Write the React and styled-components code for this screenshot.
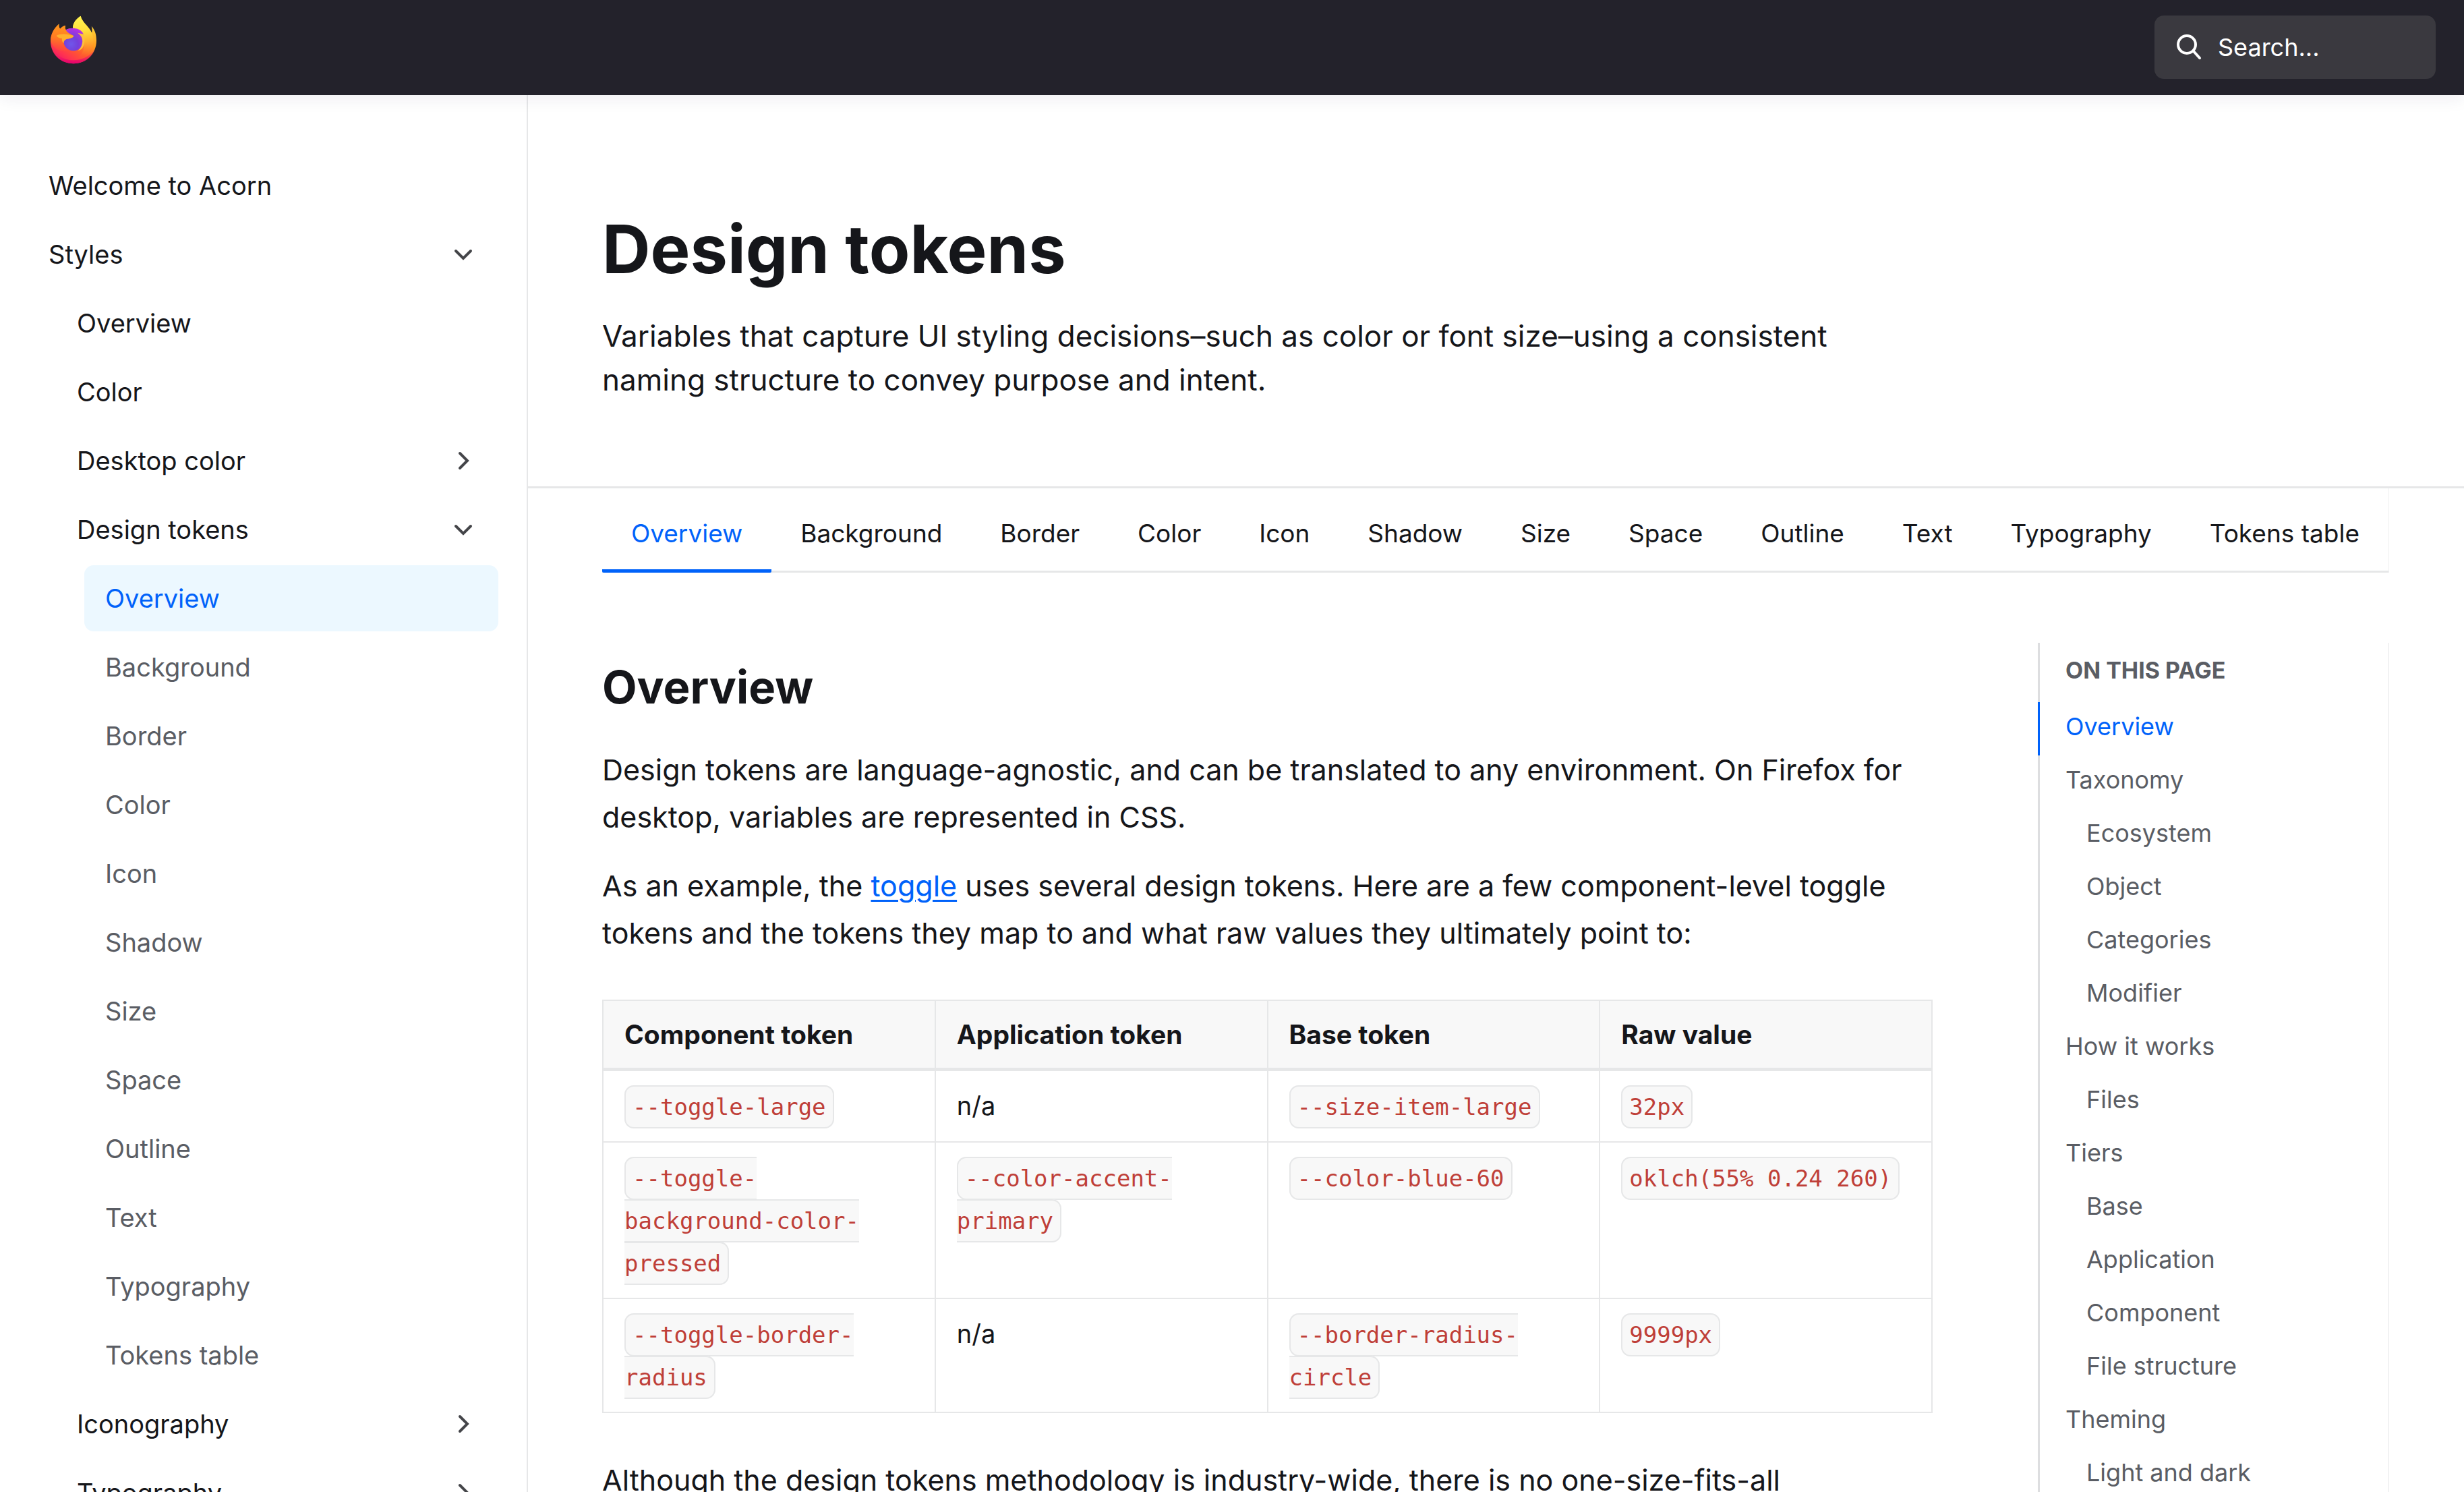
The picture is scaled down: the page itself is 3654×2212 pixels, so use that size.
import React from "react";
import styled, { createGlobalStyle, css } from "styled-components";

const color = {
  ink: "#15161a",
  muted: "#5a5d64",
  link: "#0062fa",
  line: "#e6e7e8",
  faint: "#f0f0f1",
  surface: "#f8f8f8",
  header: "#23222b",
  field: "#3a393f",
  activeBg: "#ecf8ff",
  code: "#bf3f38",
};

const GlobalStyle = createGlobalStyle`
  *, *::before, *::after { box-sizing: border-box; }
  body {
    margin: 0;
    background: #fff;
    color: ${color.ink};
    font-family: Inter, "Liberation Sans", sans-serif;
  }
  a { color: inherit; text-decoration: none; }
`;

/* ---------- shell ---------- */

const Page = styled.div`
  display: flex;
  flex-direction: column;
  height: 100vh;
  overflow: hidden;
`;

const Header = styled.header`
  position: relative;
  z-index: 1;
  display: flex;
  flex: none;
  justify-content: space-between;
  align-items: flex-start;
  height: 141px;
  padding: 23px 42px 0 74px;
  background: ${color.header};
  box-shadow: 0 4px 24px rgba(40, 30, 80, 0.08);
`;

const HomeLink = styled.a`
  display: block;
  width: 70px;
  height: 72px;
  svg {
    display: block;
    width: 100%;
    height: 100%;
  }
`;

const SearchBox = styled.label`
  display: flex;
  align-items: center;
  gap: 22px;
  width: 417px;
  height: 94px;
  padding: 0 32px;
  border-radius: 14px;
  background: ${color.field};
  svg {
    flex: none;
    width: 40px;
    height: 40px;
  }
`;

const SearchInput = styled.input`
  flex: 1;
  min-width: 0;
  padding: 0;
  border: 0;
  outline: 0;
  background: transparent;
  color: #fff;
  font: inherit;
  font-size: 36px;
  &::placeholder {
    color: #fff;
    opacity: 1;
  }
`;

const Body = styled.div`
  display: flex;
  flex: 1;
  min-height: 0;
`;

/* ---------- sidebar ---------- */

const Sidebar = styled.nav`
  flex: none;
  width: 783px;
  padding: 85px 42px 0 41px;
  border-right: 2px solid ${color.line};
  overflow: hidden;
`;

const NavList = styled.ul`
  display: flex;
  flex-direction: column;
  gap: 4px;
  margin: 0;
  padding: 0;
  list-style: none;
`;

const NavItem = styled.li`
  padding-left: ${(p) => p.$level * 42}px;
`;

const navRow = css`
  display: flex;
  align-items: center;
  justify-content: space-between;
  width: 100%;
  height: 98px;
  padding: 0 26px 0 31px;
  border: 0;
  border-radius: 14px;
  background: ${(p) => (p.$active ? color.activeBg : "transparent")};
  color: ${(p) => (p.$active ? color.link : p.$muted ? color.muted : color.ink)};
  font: inherit;
  font-size: 38px;
  text-align: left;
  white-space: nowrap;
`;

const NavLink = styled.a`
  ${navRow}
`;

const NavToggle = styled.button`
  ${navRow}
  svg {
    width: 52px;
    height: 52px;
    transform: rotate(${(p) => (p["aria-expanded"] ? 90 : 0)}deg);
  }
`;

/* ---------- main ---------- */

const Main = styled.main`
  display: flex;
  flex: 1;
  flex-direction: column;
  min-width: 0;
  overflow: hidden;
`;

const Hero = styled.section`
  flex: none;
  padding: 163px 110px 125px;
  border-bottom: 3px solid ${color.line};
`;

const Title = styled.h1`
  margin: 0;
  font-size: 99px;
  line-height: 130px;
  font-weight: 700;
`;

const Lead = styled.p`
  max-width: 1840px;
  margin: 32px 0 0;
  font-size: 44px;
  line-height: 65px;
`;

const TabBar = styled.nav`
  display: flex;
  flex: none;
  height: 125px;
  margin: 0 111px 0 110px;
  border-right: 1px solid ${color.faint};
  box-shadow: inset 0 -3px 0 ${color.line};
`;

const Tab = styled.a`
  display: flex;
  flex: 1 1 auto;
  align-items: center;
  justify-content: center;
  padding: 12px 40px 0;
  border-bottom: 5px solid ${(p) => (p.$active ? color.link : "transparent")};
  border-radius: 2px;
  color: ${(p) => (p.$active ? color.link : color.ink)};
  font-size: 37px;
  white-space: nowrap;
`;

const Columns = styled.div`
  display: flex;
  flex: 1;
  gap: 156px;
  min-height: 0;
  padding: 104px 111px 0 110px;
`;

const Article = styled.article`
  flex: 1;
  min-width: 0;
  padding-top: 26px;
`;

const Heading = styled.h2`
  margin: 0 0 47px;
  font-size: 67px;
  line-height: 80px;
  font-weight: 700;
`;

const Text = styled.p`
  margin: 32px 0;
  font-size: 43px;
  line-height: 70px;
`;

const TextLink = styled.a`
  color: ${color.link};
  text-decoration: underline;
  text-decoration-thickness: 3px;
  text-underline-offset: 5px;
`;

/* ---------- table ---------- */

const Table = styled.table`
  width: 100%;
  margin: 64px 0;
  border-collapse: collapse;
  table-layout: fixed;
  line-height: 63px;
`;

const HeadCell = styled.th`
  padding: 18px 31px;
  border: 2px solid ${color.line};
  border-bottom-width: 5px;
  background: ${color.surface};
  font-size: 39px;
  font-weight: 700;
  text-align: left;
`;

const Cell = styled.td`
  padding: 20px 42px 21px 31px;
  border: 2px solid ${color.line};
  font-size: 38px;
  vertical-align: top;
`;

const Code = styled.code`
  padding: 10px;
  border: 2px solid ${color.line};
  border-radius: 14px;
  background: ${color.surface};
  color: ${color.code};
  font-family: "DejaVu Sans Mono", monospace;
  font-size: 34px;
  line-height: 1;
`;

/* ---------- table of contents ---------- */

const Toc = styled.aside`
  display: flex;
  flex: none;
  flex-direction: column;
  width: 521px;
  border-right: 1px solid ${color.line};
  box-shadow: inset 3px 0 0 #dddee0;
`;

const TocTitle = styled.h2`
  flex: none;
  margin: 0;
  padding: 15px 41px 21px;
  color: ${color.muted};
  font-size: 34px;
  line-height: 52px;
  font-weight: 700;
  text-transform: uppercase;
`;

const TocLink = styled.a`
  flex: none;
  height: 79px;
  padding-left: ${(p) => (p.$nested ? 69 : 38)}px;
  border-left: 3px solid ${(p) => (p.$active ? color.link : "transparent")};
  color: ${(p) => (p.$active ? color.link : color.muted)};
  font-size: 36px;
  line-height: 73px;
`;

/* ---------- drawings ---------- */

const FirefoxLogo = () => (
  <svg viewBox="43 40 212 217" aria-hidden="true">
    <defs>
      <linearGradient id="fx-body" x1="215" y1="70" x2="95" y2="250" gradientUnits="userSpaceOnUse">
        <stop offset="0" stopColor="#ffd73a" />
        <stop offset="0.35" stopColor="#ff9a1f" />
        <stop offset="0.62" stopColor="#ff5a2e" />
        <stop offset="0.84" stopColor="#ff3350" />
        <stop offset="1" stopColor="#f01868" />
      </linearGradient>
      <linearGradient id="fx-head" x1="90" y1="80" x2="80" y2="215" gradientUnits="userSpaceOnUse">
        <stop offset="0" stopColor="#ff981c" />
        <stop offset="0.45" stopColor="#ff7a24" />
        <stop offset="1" stopColor="#ff4a3a" stopOpacity="0" />
      </linearGradient>
      <linearGradient id="fx-flame" x1="180" y1="45" x2="205" y2="225" gradientUnits="userSpaceOnUse">
        <stop offset="0" stopColor="#fff450" />
        <stop offset="0.35" stopColor="#ffdf3c" />
        <stop offset="0.65" stopColor="#ffac2c" />
        <stop offset="1" stopColor="#ff6a30" stopOpacity="0" />
      </linearGradient>
      <radialGradient id="fx-globe" cx="138" cy="168" r="72" gradientUnits="userSpaceOnUse">
        <stop offset="0" stopColor="#7056ea" />
        <stop offset="0.45" stopColor="#7440da" />
        <stop offset="1" stopColor="#b62fe4" />
      </radialGradient>
      <linearGradient id="fx-rim" x1="150" y1="190" x2="150" y2="255" gradientUnits="userSpaceOnUse">
        <stop offset="0" stopColor="#ff2a5a" stopOpacity="0" />
        <stop offset="1" stopColor="#e2006e" />
      </linearGradient>
    </defs>
    <path
      fill="url(#fx-body)"
      d="M46 155C46 124 60 98 84 77C82 88 85 95 89 99C96 91 104 87 113 84C110 92 111 99 115 104C125 98 136 97 146 98C145 75 160 55 181 42C186 62 200 75 213 90C222 100 228 110 231 118C233 108 233 98 230 88C246 104 252 128 252 152C252 210 206 255 149 255C92 255 46 212 46 155Z"
    />
    <path
      fill="url(#fx-flame)"
      d="M146 98C145 75 160 55 181 42C186 62 200 75 213 90C232 112 242 138 238 162C232 198 205 222 172 226C192 208 198 188 196 160C190 130 170 105 146 98Z"
    />
    <path
      fill="url(#fx-rim)"
      d="M47 168C62 215 100 240 149 240C200 240 238 210 250 172C244 220 202 255 149 255C96 255 53 219 47 168Z"
    />
    <circle cx="149" cy="153" r="45" fill="url(#fx-globe)" />
    <path
      fill="url(#fx-globe)"
      d="M113 105C128 95 152 94 170 101C183 106 190 114 194 124C186 121 180 122 176 124L150 150L112 130Z"
    />
    <path
      fill="#ffc13a"
      d="M167 117C174 121 186 121 194 124C201 140 200 162 193 178C188 189 180 195 170 197C188 180 196 152 182 132C177 126 171 121 167 117Z"
    />
    <path
      fill="url(#fx-head)"
      d="M84 77C82 88 85 95 89 99C96 91 104 87 113 84C110 92 111 99 115 104C119 114 128 119 150 131C148 139 134 143 119 145C109 148 104 156 105 170C108 184 115 192 124 199C90 205 60 190 46 155C46 124 60 98 84 77Z"
    />
    <path
      fill="#ffb02e"
      d="M72 130C84 122 104 121 122 124C134 126 144 128 150 131C148 139 134 143 119 145C110 148 105 154 105 164C98 158 96 150 97 142C88 142 78 138 72 130Z"
    />
  </svg>
);

const SearchIcon = () => (
  <svg viewBox="0 0 40 40" fill="none" stroke="#fff" strokeWidth="4" strokeLinecap="round" aria-hidden="true">
    <circle cx="16" cy="16" r="13" />
    <path d="M26 26L35 36" />
  </svg>
);

const Chevron = () => (
  <svg viewBox="0 0 52 52" fill="none" stroke="#444549" strokeWidth="4" strokeLinecap="round" aria-hidden="true">
    <path d="M21 15L32 26L21 37" />
  </svg>
);

/* ---------- content ---------- */

const navItems = [
  { label: "Welcome to Acorn", level: 0 },
  { label: "Styles", level: 0, open: true },
  { label: "Overview", level: 1 },
  { label: "Color", level: 1 },
  { label: "Desktop color", level: 1, open: false },
  { label: "Design tokens", level: 1, open: true },
  { label: "Overview", level: 2, active: true },
  { label: "Background", level: 2 },
  { label: "Border", level: 2 },
  { label: "Color", level: 2 },
  { label: "Icon", level: 2 },
  { label: "Shadow", level: 2 },
  { label: "Size", level: 2 },
  { label: "Space", level: 2 },
  { label: "Outline", level: 2 },
  { label: "Text", level: 2 },
  { label: "Typography", level: 2 },
  { label: "Tokens table", level: 2 },
  { label: "Iconography", level: 1, open: false },
  { label: "Typography", level: 1, open: false },
];

const tabs = [
  "Overview", "Background", "Border", "Color", "Icon", "Shadow",
  "Size", "Space", "Outline", "Text", "Typography", "Tokens table",
];

const columns = ["Component token", "Application token", "Base token", "Raw value"];

const rows = [
  ["--toggle-large", null, "--size-item-large", "32px"],
  ["--toggle-background-color-pressed", "--color-accent-primary", "--color-blue-60", "oklch(55% 0.24 260)"],
  ["--toggle-border-radius", null, "--border-radius-circle", "9999px"],
];

const toc = [
  ["Overview", false], ["Taxonomy", false], ["Ecosystem", true], ["Object", true],
  ["Categories", true], ["Modifier", true], ["How it works", false], ["Files", true],
  ["Tiers", false], ["Base", true], ["Application", true], ["Component", true],
  ["File structure", true], ["Theming", false], ["Light and dark", true],
];

export default function App() {
  return (
    <Page>
      <GlobalStyle />
      <Header>
        <HomeLink href="#" aria-label="Home">
          <FirefoxLogo />
        </HomeLink>
        <SearchBox htmlFor="site-search">
          <SearchIcon />
          <SearchInput id="site-search" type="text" placeholder="Search..." aria-label="Search" />
        </SearchBox>
      </Header>
      <Body>
        <Sidebar aria-label="Site">
          <NavList>
            {navItems.map((item, i) => (
              <NavItem key={i} $level={item.level}>
                {item.open === undefined ? (
                  <NavLink href="#" $active={item.active} $muted={item.level === 2}>
                    {item.label}
                  </NavLink>
                ) : (
                  <NavToggle type="button" aria-expanded={item.open}>
                    {item.label}
                    <Chevron />
                  </NavToggle>
                )}
              </NavItem>
            ))}
          </NavList>
        </Sidebar>
        <Main>
          <Hero>
            <Title>Design tokens</Title>
            <Lead>
              Variables that capture UI styling decisions–such as color or font size–using a consistent
              naming structure to convey purpose and intent.
            </Lead>
          </Hero>
          <TabBar aria-label="Sections">
            {tabs.map((label, i) => (
              <Tab key={label} href="#" $active={i === 0}>
                {label}
              </Tab>
            ))}
          </TabBar>
          <Columns>
            <Article>
              <Heading>Overview</Heading>
              <Text>
                Design tokens are language-agnostic, and can be translated to any environment. On Firefox for
                desktop, variables are represented in CSS.
              </Text>
              <Text>
                As an example, the <TextLink href="#">toggle</TextLink> uses several design tokens. Here are a
                few component-level toggle tokens and the tokens they map to and what raw values they
                ultimately point to:
              </Text>
              <Table>
                <thead>
                  <tr>
                    {columns.map((label) => (
                      <HeadCell key={label} scope="col">{label}</HeadCell>
                    ))}
                  </tr>
                </thead>
                <tbody>
                  {rows.map((row) => (
                    <tr key={row[0]}>
                      {row.map((value, i) => (
                        <Cell key={i}>{value ? <Code>{value}</Code> : "n/a"}</Cell>
                      ))}
                    </tr>
                  ))}
                </tbody>
              </Table>
              <Text>
                Although the design tokens methodology is industry-wide, there is no one-size-fits-all
              </Text>
            </Article>
            <Toc>
              <TocTitle>On this page</TocTitle>
              {toc.map(([label, nested], i) => (
                <TocLink key={label} href="#" $nested={nested} $active={i === 0}>
                  {label}
                </TocLink>
              ))}
            </Toc>
          </Columns>
        </Main>
      </Body>
    </Page>
  );
}
